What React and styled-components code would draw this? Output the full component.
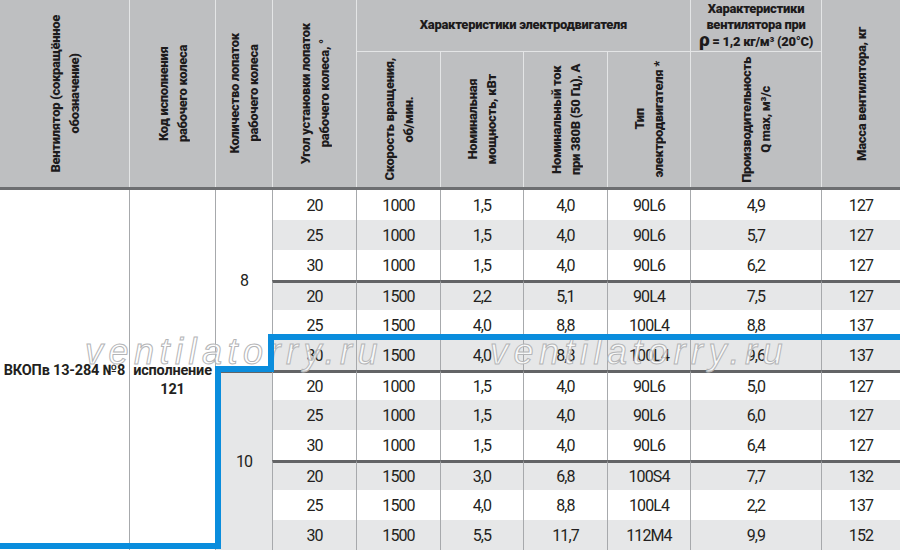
import styled, { createGlobalStyle } from "styled-components";

const FONT = `Roboto, "Liberation Sans", Arial, sans-serif`;
const COLS = "129px 86px 57px 84px 84px 83px 84px 83px 131px 79px";

const ROWS = [
    ["20", "1000", "1,5", "4,0", "90L6", "4,9", "127"],
    ["25", "1000", "1,5", "4,0", "90L6", "5,7", "127"],
    ["30", "1000", "1,5", "4,0", "90L6", "6,2", "127"],
    ["20", "1500", "2,2", "5,1", "90L4", "7,5", "127"],
    ["25", "1500", "4,0", "8,8", "100L4", "8,8", "137"],
    ["30", "1500", "4,0", "8,8", "100L4", "9,6", "137"],
    ["20", "1000", "1,5", "4,0", "90L6", "5,0", "127"],
    ["25", "1000", "1,5", "4,0", "90L6", "6,0", "127"],
    ["30", "1000", "1,5", "4,0", "90L6", "6,4", "127"],
    ["20", "1500", "3,0", "6,8", "100S4", "7,7", "132"],
    ["25", "1500", "4,0", "8,8", "100L4", "2,2", "137"],
    ["30", "1500", "5,5", "11,7", "112M4", "9,9", "152"],
];

const GlobalStyle = createGlobalStyle`
    html, body {
        margin: 0;
        padding: 0;
        background: #fff;
    }
    body {
        width: 900px;
        height: 550px;
        overflow: hidden;
        font-family: ${FONT};
        color: #231f20;
    }
`;

const Page = styled.div`
    position: relative;
    width: 900px;
    height: 550px;
    overflow: hidden;
`;

const Head = styled.div`
    display: grid;
    grid-template-columns: ${COLS};
    grid-template-rows: 52px 135px;
    background: #bebfc1;
    border-bottom: 3px solid #6d6e71;
`;

const HeadCell = styled.div`
    box-sizing: border-box;
    display: flex;
    align-items: center;
    justify-content: center;
    text-align: center;
    font-weight: 900;
    font-size: 13px;
    letter-spacing: -0.3px;
    white-space: nowrap;
    color: #1d1b1c;
    border-left: ${({ $first }) => ($first ? "none" : "1px solid #e4e5e6")};
    border-bottom: ${({ $group }) => ($group ? "1px solid #e4e5e6" : "none")};
    grid-row: ${({ $span }) => ($span ? "1 / span 2" : "auto")};
    grid-column: ${({ $cols }) => $cols || "auto"};
`;

const Vertical = styled.span`
    writing-mode: vertical-rl;
    transform: rotate(180deg);
    line-height: 19px;
`;

const Flat = styled.span`
    line-height: 16.5px;
`;

const Rho = styled.span`
    font-size: 19px;
    line-height: 10px;
`;

const Body = styled.div`
    display: grid;
    grid-template-columns: ${COLS};
    grid-template-rows: repeat(12, 30px);
`;

const Cell = styled.div`
    box-sizing: border-box;
    display: flex;
    align-items: center;
    justify-content: center;
    text-align: center;
    font-size: 16px;
    letter-spacing: -0.9px;
    background: ${({ $shade }) => ($shade ? "#e6e7e8" : "#fff")};
    border-left: ${({ $first }) => ($first ? "none" : "1px solid #a7a9ac")};
    border-top: ${({ $sep }) => ($sep ? "3px solid #636466" : "none")};
`;

const ModelCell = styled(Cell)`
    grid-column: 1;
    grid-row: 1 / span 12;
    font-weight: bold;
    font-size: 14.5px;
    letter-spacing: -0.2px;
    white-space: nowrap;
`;

const CodeCell = styled(Cell)`
    grid-column: 2;
    grid-row: 1 / span 12;
    flex-direction: column;
    padding-top: 19px;
    font-weight: bold;
    font-size: 14.5px;
    letter-spacing: -0.2px;
    line-height: 19px;
`;

const BladesCell = styled(Cell)`
    grid-column: 3;
    grid-row: ${({ $from }) => `${$from} / span 6`};
`;

const Watermark = styled.span`
    position: absolute;
    top: 335px;
    left: ${({ $x }) => $x}px;
    font-family: "Liberation Sans", Arial, sans-serif;
    font-style: italic;
    font-size: 36px;
    line-height: 34px;
    letter-spacing: 5.5px;
    color: rgba(255, 255, 255, 0.75);
    -webkit-text-stroke: 1px #b4b5b7;
    pointer-events: none;
    white-space: nowrap;
`;

const Outline = styled.svg`
    position: absolute;
    left: 0;
    top: 0;
    pointer-events: none;
`;

const v = (lines) =>
    lines.map((l, i) => (
        <span key={i}>
            {i > 0 && <br />}
            {l}
        </span>
    ));

export default function App() {
    return (
        <Page>
            <GlobalStyle />
            <Head>
                <HeadCell $first $span>
                    <Vertical>{v(["Вентилятор (сокращённое", "обозначение)"])}</Vertical>
                </HeadCell>
                <HeadCell $span>
                    <Vertical>{v(["Код исполнения", "рабочего колеса"])}</Vertical>
                </HeadCell>
                <HeadCell $span>
                    <Vertical>{v(["Количество лопаток", "рабочего колеса"])}</Vertical>
                </HeadCell>
                <HeadCell $span>
                    <Vertical>{v(["Угол установки лопаток", "рабочего колеса, °"])}</Vertical>
                </HeadCell>
                <HeadCell $group $cols="5 / span 4">
                    <Flat>Характеристики электродвигателя</Flat>
                </HeadCell>
                <HeadCell $group $cols="9">
                    <Flat>
                        Характеристики
                        <br />
                        вентилятора при
                        <br />
                        <Rho>ρ</Rho> = 1,2 кг/м³ (20°C)
                    </Flat>
                </HeadCell>
                <HeadCell $span $cols="10">
                    <Vertical>Масса вентилятора, кг</Vertical>
                </HeadCell>
                <HeadCell $cols="5">
                    <Vertical>{v(["Скорость вращения,", "об/мин."])}</Vertical>
                </HeadCell>
                <HeadCell $cols="6">
                    <Vertical>{v(["Номинальная", "мощность, кВт"])}</Vertical>
                </HeadCell>
                <HeadCell $cols="7">
                    <Vertical>{v(["Номинальный ток", "при 380В (50 Гц), А"])}</Vertical>
                </HeadCell>
                <HeadCell $cols="8">
                    <Vertical>{v(["Тип", "электродвигателя *"])}</Vertical>
                </HeadCell>
                <HeadCell $cols="9">
                    <Vertical>{v(["Производительность", "Q max, м³/с"])}</Vertical>
                </HeadCell>
            </Head>
            <Body>
                <ModelCell $first>ВКОПв 13-284 №8</ModelCell>
                <CodeCell>
                    <span>исполнение</span>
                    <span>121</span>
                </CodeCell>
                <BladesCell $from={1}>8</BladesCell>
                <BladesCell $from={7} $shade $sep>10</BladesCell>
                {ROWS.map((row, r) =>
                    row.map((val, c) => (
                        <Cell key={`${r}-${c}`} $shade={r % 2 === 1} $sep={r > 0 && r % 3 === 0}>
                            {val}
                        </Cell>
                    ))
                )}
            </Body>
            <Watermark $x={85}>ventilatorry.ru</Watermark>
            <Watermark $x={490}>ventilatorry.ru</Watermark>
            <Outline width="900" height="550" viewBox="0 0 900 550">
                <path
                    d="M905 337 H271 V369 H218 V546 H-5"
                    fill="none"
                    stroke="#0a8ddd"
                    strokeWidth="6"
                    strokeLinejoin="miter"
                />
            </Outline>
        </Page>
    );
}
